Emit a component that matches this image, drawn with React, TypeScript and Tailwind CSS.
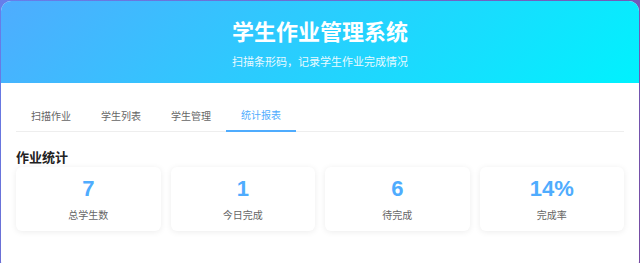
const tabs = ['扫描作业', '学生列表', '学生管理', '统计报表'];

const stats = [
  { value: '7', label: '总学生数' },
  { value: '1', label: '今日完成' },
  { value: '6', label: '待完成' },
  { value: '14%', label: '完成率' },
];

export default function App() {
  const active = 3;

  return (
    <div
      className="h-[263px] w-[640px] overflow-hidden bg-[linear-gradient(135deg,#667eea_0%,#764ba2_100%)] p-[1px]"
      style={{ fontFamily: '"Liberation Sans", "Noto Sans CJK SC", sans-serif' }}
    >
      <div className="h-[270px] overflow-hidden rounded-[10px] bg-white">
        {/* Header */}
        <div className="flex h-[82px] flex-col items-center bg-[linear-gradient(135deg,#4facfe_0%,#00f2fe_100%)] text-white">
          <h1 className="mt-[19px] text-[22px] font-bold leading-[26px]">学生作业管理系统</h1>
          <p className="mt-[9px] text-[11px] leading-[14px] opacity-90">扫描条形码，记录学生作业完成情况</p>
        </div>

        <div className="px-[15px] pt-[18px]">
          {/* Tabs */}
          <div className="flex border-b border-[#eeeeee]">
            {tabs.map((t, i) => (
              <div
                key={t}
                className={
                  i === active
                    ? 'mb-[-1px] flex h-[31px] w-[70px] items-center justify-center border-b-2 border-[#4facfe] text-[10px] text-[#4facfe]'
                    : 'flex h-[30px] w-[70px] items-center justify-center text-[10px] text-[#666666]'
                }
              >
                {t}
              </div>
            ))}
          </div>

          {/* Stats */}
          <h2 className="mt-[18px] text-[13px] font-bold leading-[16px] text-[#222222]">作业统计</h2>
          <div className="mt-[1px] grid grid-cols-4 gap-[10px]">
            {stats.map((s) => (
              <div
                key={s.label}
                className="flex h-[64px] flex-col items-center rounded-[6px] bg-white shadow-[0_1px_6px_rgba(0,0,0,0.08)]"
              >
                <div className="mt-[10px] text-[22px] font-bold leading-[24px] text-[#4facfe]">{s.value}</div>
                <div className="mt-[8px] text-[10px] leading-[14px] text-[#666666]">{s.label}</div>
              </div>
            ))}
          </div>
        </div>
      </div>
    </div>
  );
}
